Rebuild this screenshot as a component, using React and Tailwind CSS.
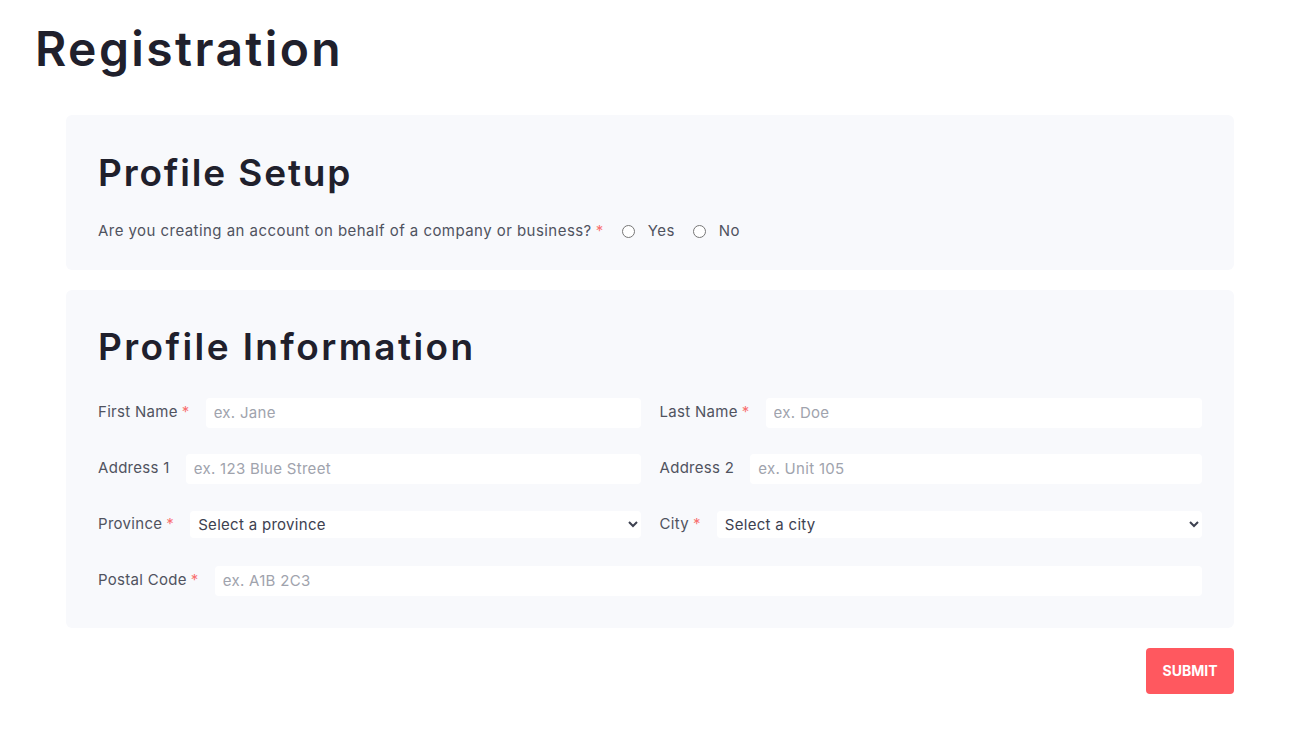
import React from 'react';

const Req = () => <span className="text-[#f87171] ml-1">*</span>;

const Field = ({ label, required, placeholder, type = 'input', options }) => (
  <div className="flex items-center gap-4 flex-1 min-w-0">
    <label className="text-[15px] text-[#50535f] whitespace-nowrap tracking-[0.02em]">
      {label}
      {required && <Req />}
    </label>
    {type === 'select' ? (
      <select className="flex-1 min-w-0 h-[27px] bg-white text-[15px] tracking-[0.02em] text-[#3d4150] px-1 rounded-sm outline-none">
        <option>{options}</option>
      </select>
    ) : (
      <input
        placeholder={placeholder}
        className="flex-1 min-w-0 h-[30px] bg-white text-[15px] tracking-[0.02em] px-2 rounded-sm outline-none placeholder:text-[#a0a3ad]"
      />
    )}
  </div>
);

export default function App() {
  return (
    <div className="min-h-screen bg-white font-['Inter',sans-serif] text-[#20202c] px-[35px] pt-[18px]">
      <h1 className="text-[48px] font-semibold leading-[62px] tracking-[0.05em]">Registration</h1>

      <div className="mx-[31px] mt-[35px] flex flex-col gap-5">
        {/* Profile Setup */}
        <section className="bg-[#f8f9fc] rounded-md px-8 pt-[34px] pb-[27px]">
          <h2 className="text-[37px] font-semibold leading-[48px] tracking-[0.05em]">Profile Setup</h2>
          <div className="mt-[23px] flex items-center text-[15px] text-[#50535f] tracking-[0.03em]">
            <span>
              Are you creating an account on behalf of a company or business?
              <Req />
            </span>
            <label className="flex items-center ml-[18px] gap-[13px]">
              <input type="radio" name="biz" className="w-[13px] h-[13px] m-0" />
              Yes
            </label>
            <label className="flex items-center ml-[18px] gap-[13px]">
              <input type="radio" name="biz" className="w-[13px] h-[13px] m-0" />
              No
            </label>
          </div>
        </section>

        {/* Profile Information */}
        <section className="bg-[#f8f9fc] rounded-md px-8 pt-[33px] pb-[32px]">
          <h2 className="text-[37px] font-semibold leading-[48px] tracking-[0.065em]">Profile Information</h2>
          <div className="mt-[27px] flex flex-col gap-[26px]">
            <div className="flex h-[30px] gap-[19px]">
              <Field label="First Name" required placeholder="ex. Jane" />
              <Field label="Last Name" required placeholder="ex. Doe" />
            </div>
            <div className="flex h-[30px] gap-[19px]">
              <Field label="Address 1" placeholder="ex. 123 Blue Street" />
              <Field label="Address 2" placeholder="ex. Unit 105" />
            </div>
            <div className="flex h-[30px] gap-[19px]">
              <Field label="Province" required type="select" options="Select a province" />
              <Field label="City" required type="select" options="Select a city" />
            </div>
            <div className="flex h-[30px]">
              <Field label="Postal Code" required placeholder="ex. A1B 2C3" />
            </div>
          </div>
        </section>

        <div className="flex justify-end">
          <button className="bg-[#ff585f] text-white font-['Inter',sans-serif] font-bold text-[14px] w-[88px] h-[46px] rounded-sm">
            SUBMIT
          </button>
        </div>
      </div>
    </div>
  );
}
